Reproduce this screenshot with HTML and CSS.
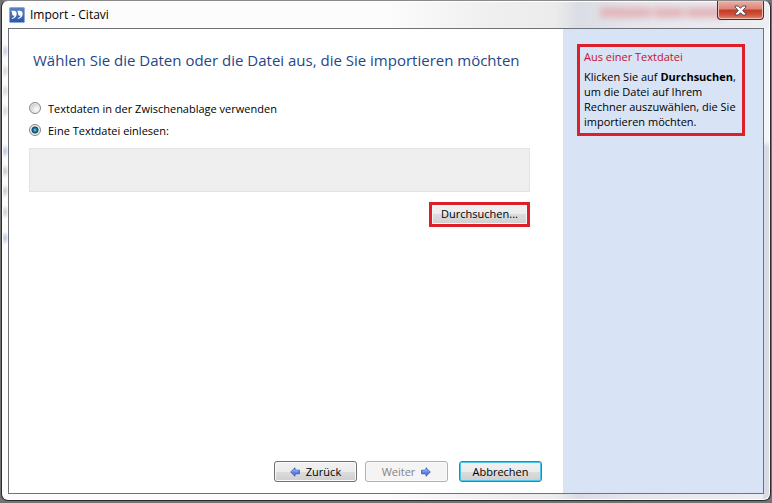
FILE: index.html
```
<!DOCTYPE html>
<html lang="de">
<head>
   <meta charset="UTF-8"><title>Import - Citavi</title>
   <link rel="stylesheet" href="styles.css">
</head> <body>

<div class="window">
   <header class="titlebar">
      <svg class="logo" width="16" height="16" viewBox="0 0 16 16" aria-hidden="true">
         <defs><linearGradient id="tile" x1="0" y1="0" x2="0" y2="1">
            <stop offset="0" stop-color="#5b82c6"/><stop offset="1" stop-color="#2a57a8"/>
         </linearGradient></defs>
         <rect x=".5" y=".5" width="15" height="15" rx="1" fill="url(#tile)" stroke="#8faad6"/>
         <path d="M2.200 3.800h2.800c1.600 0 2.700 1.200 2.700 3 0 2.800-1.900 4.700-4.900 5.300v-1c1.700-.6 2.700-1.600 2.800-2.900-.6.500-1.200.6-1.800.4C2.900 8.200 3.600 5.500 2.200 3.800z" fill="#fff"/>
         <path d="M8.200 3.800H11c1.600 0 2.700 1.200 2.700 3 0 2.800-1.900 4.700-4.900 5.300v-1c1.700-.6 2.700-1.600 2.800-2.900-.6.500-1.200.6-1.800.4C8.900 8.200 9.600 5.500 8.200 3.800z" fill="#fff"/>
      </svg>
      <span class="caption">Import - Citavi</span>
      <span class="glass"></span>
      <button class="close" aria-label="Schließen">
         <svg width="13" height="11" viewBox="0 0 13 11" aria-hidden="true">
            <path d="M1 1h3.300L6.500 3.300 8.700 1H12v1L8.700 5.500 12 9v1H8.700L6.500 7.700 4.300 10H1V9l3.300-3.500L1 2z" fill="#fff" stroke="#5a4a50"/>
         </svg>
      </button>
   </header>

   <div class="client">
      <main class="page">
         <h1>Wählen Sie die Daten oder die Datei aus, die Sie importieren möchten</h1>
         <div class="options">
            <label><input type="radio" name="source" value="clipboard">Textdaten in der Zwischenablage verwenden</label>
            <label><input type="radio" name="source" value="file" checked>Eine Textdatei einlesen:</label>
         </div>
         <textarea class="path" aria-label="Textdatei" readonly></textarea>
         <button class="browse">Durchsuchen...</button>

         <footer class="actions">
            <button class="btn">
               <svg width="10" height="10" viewBox="0 0 10 10" aria-hidden="true">
                  <path d="M.7 5 5 .8v2.400h4.400v3.600H5v2.400z" fill="#5e83e6" stroke="#2c4fa8" stroke-width=".8"/>
                  <path d="M2 4.800 4.300 2.500V4h4.300" fill="none" stroke="#a3c0fa" stroke-width=".8"/>
               </svg>
               Zurück
            </button>
            <button class="btn" disabled>
               Weiter
               <svg width="10" height="10" viewBox="0 0 10 10" aria-hidden="true">
                  <path d="M9.300 5 5 .8v2.400H.6v3.600H5v2.400z" fill="#5e83e6" stroke="#2c4fa8" stroke-width=".8"/>
                  <path d="M8 4.800 5.700 2.500V4H1.400" fill="none" stroke="#a3c0fa" stroke-width=".8"/>
               </svg>
            </button>
            <button class="btn default">Abbrechen</button>
         </footer>
      </main>

      <aside class="help">
         <section class="hint">
            <h2>Aus einer Textdatei</h2>
            <p>Klicken Sie auf <b>Durchsuchen</b>, um die Datei auf Ihrem Rechner auszuwählen, die Sie importieren möchten.</p>
         </section>
      </aside>
   </div>
</div>

</body> </html>
```
FILE: styles.css
```
* {
   box-sizing: border-box;
}

body {
   margin: 0;
   min-height: 100vh;
   padding: 0 1px 2px;
   display: flex;
   background: #727272;
   font: 11px/15px "Open Sans", "Noto Sans", sans-serif;
   color: #000;
}

button, textarea {
   font: inherit;
   color: inherit;
}

h1, h2, p {
   margin: 0;
   font-weight: normal;
}

.window {
   flex: 1;
   display: flex;
   flex-direction: column;
   padding: 0 6px 6px;
   border: 1px solid #2b2b2e;
   border-top-color: #8a8a8a;
   border-radius: 7px;
   background:
      radial-gradient(4px 7px at 3px 50px, #c3cee6, transparent),
      radial-gradient(4px 7px at 3px 70px, #d8d8d8, transparent),
      radial-gradient(4px 7px at 3px 90px, #d8d8d8, transparent),
      radial-gradient(4px 7px at 3px 110px, #d8d8d8, transparent),
      radial-gradient(4px 7px at 3px 150px, #b9c6e2, transparent),
      radial-gradient(4px 7px at 3px 170px, #c8c8c8, transparent),
      radial-gradient(4px 7px at 3px 190px, #cfc8c8, transparent),
      radial-gradient(4px 7px at 3px 211px, #d0cecb, transparent),
      radial-gradient(4px 7px at 3px 237px, #b9c6e2, transparent),
      linear-gradient(#f4f5f8 112px, #d6dbe6 118px) right 28px / 7px 100% no-repeat,
      linear-gradient(90deg, #fcfcfc 50%, #efefef 64%, #ececec 72%, #dadde4 75%, #e4e6ec 82%, #eceef2);
   box-shadow: inset 0 0 0 1px #fff;
}

/* title bar */

.titlebar {
   display: flex;
   align-items: center;
   height: 27px;
}

.caption {
   margin-left: 5px;
   padding-bottom: 1px;
   font-size: 12px;
}

.logo {
   margin-left: 1px;
}

.glass {
   width: 125px;
   height: 11px;
   margin: 0 -8px 5px auto;
   background: linear-gradient(90deg, #e2b8be 0 38%, #e4cfd4 42%, #e2b8be 46% 64%, #e4cfd4 68%, #e2b8be 72%);
   filter: blur(3px);
}

.close {
   position: relative;
   align-self: flex-start;
   display: flex;
   align-items: center;
   justify-content: center;
   width: 47px;
   height: 19px;
   padding: 0;
   border: 1px solid #5a2427;
   border-top: 0;
   border-radius: 0 0 4px 4px;
   background: linear-gradient(#ebb0a6, #dc8476 45%, #c23a26 50%, #cf5038 75%, #e08a70);
   box-shadow: inset 0 0 0 1px #efbcb4;
}

/* client area */

.client {
   flex: 1;
   display: flex;
   border: 1px solid #717277;
   background: #fff;
}

.page {
   flex: 1;
   display: flex;
   flex-direction: column;
   padding: 19px 33px 11px 20px;
}

h1 {
   margin-left: 4px;
   font-size: 15px;
   line-height: 24px;
   color: #1f4788;
   white-space: nowrap;
}

.options {
   display: grid;
   gap: 8px;
   margin: 29px 0 11px;
}

.options label {
   display: flex;
   align-items: center;
   gap: 7px;
   height: 14px;
}

input[type="radio"] {
   appearance: none;
   width: 12px;
   height: 12px;
   margin: 0;
   border: 1px solid #868788;
   border-radius: 50%;
   background: radial-gradient(circle at 65% 65%, #f4f4f4 20%, #c2c5c9 75%);
   box-shadow: inset 0 0 0 1px #f1f1f1;
}

input[type="radio"]:checked {
   background: radial-gradient(circle, #7ccbe6 0, #2586ae 22%, #123f5c 44%, #e2e6ea 56%);
}

.path {
   display: block;
   width: 100%;
   height: 44px;
   border: 1px solid #e2e2e2;
   background: #efefef;
   outline: 0;
   resize: none;
}

.browse {
   align-self: flex-end;
   width: 101px;
   height: 25px;
   margin-top: 10px;
   padding: 0 0 2px;
   border: 3px solid #dc1f29;
   background: linear-gradient(#f2f2f2, #ebebeb 50%, #dcdcdc 50%, #cfcfcf);
   box-shadow: inset 0 0 0 1px #f6f6f6;
}

.actions {
   display: flex;
   justify-content: flex-end;
   gap: 8px;
   margin: auto -12px 0 0;
}

.btn {
   display: flex;
   align-items: center;
   justify-content: center;
   gap: 6px;
   width: 83px;
   height: 21px;
   padding: 0;
   border: 1px solid #707070;
   border-radius: 3px;
   background: linear-gradient(#f2f2f2, #ebebeb 50%, #dddddd 50%, #cfcfcf);
   box-shadow: inset 0 0 0 1px #fafafa;
}

.btn:disabled {
   border-color: #adb2b5;
   background: #f4f4f4;
   color: #838383;
}

.btn.default {
   margin-left: 3px;
   border-color: #3c7fb1;
   box-shadow: inset 0 0 0 1px #48c8ef;
}

/* help column */

.help {
   width: 200px;
   padding: 15px 18px 0 14px;
   background: #d8e3f5;
}

.hint {
   padding: 2px 0 4px 4px;
   border: 3px solid #dc1f29;
}

h2 {
   margin-bottom: 5px;
   font-size: 11px;
   color: #c5102f;
}
```
